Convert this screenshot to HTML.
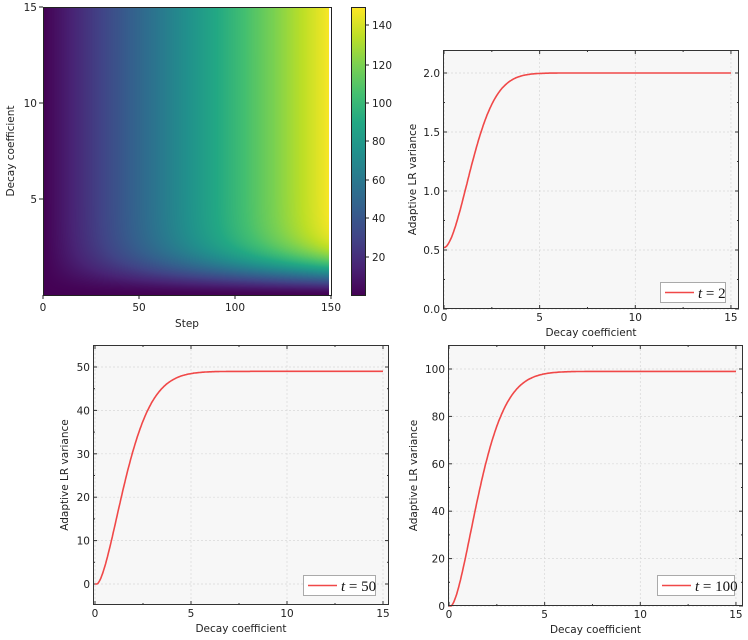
<!DOCTYPE html>
<html><head><meta charset="utf-8"><style>
html,body{margin:0;padding:0;background:#fff;width:748px;height:640px;overflow:hidden;position:relative}
svg{display:block;position:absolute;left:0;top:0}
canvas{position:absolute;left:43px;top:7px}
text{font-family:"DejaVu Sans","Liberation Sans",sans-serif;font-size:10.5px;fill:#222}
.leg{font-family:"Liberation Serif",serif;font-size:15px;fill:#111}
</style></head><body>
<canvas id="c" width="286" height="288"></canvas>
<svg id="s" width="748" height="640" xmlns="http://www.w3.org/2000/svg">
<defs>
<linearGradient id="virv" x1="0" y1="1" x2="0" y2="0">
<stop offset="0" stop-color="#440154"/><stop offset="0.1" stop-color="#482475"/><stop offset="0.2" stop-color="#414487"/><stop offset="0.3" stop-color="#355f8d"/><stop offset="0.4" stop-color="#2a788e"/><stop offset="0.5" stop-color="#21918c"/><stop offset="0.6" stop-color="#22a884"/><stop offset="0.7" stop-color="#44bf70"/><stop offset="0.8" stop-color="#7ad151"/><stop offset="0.9" stop-color="#bddf26"/><stop offset="1" stop-color="#fde725"/>
</linearGradient>
</defs>
<rect x="43.5" y="7.5" width="288" height="288" fill="none" stroke="#222" stroke-width="1"/>
<rect x="351.5" y="7.5" width="14" height="288" fill="url(#virv)" stroke="#222" stroke-width="1"/>
</svg>
<script>
var V=[[68,1,84],[72,36,117],[65,68,135],[53,95,141],[42,120,142],[33,145,140],[34,168,132],[68,191,112],[122,209,81],[189,223,38],[253,231,37]];
function vir(t){t=Math.max(0,Math.min(1,t))*10;var i=Math.min(9,Math.floor(t)),f=t-i;return V[i].map(function(a,k){return Math.round(a+(V[i+1][k]-a)*f);});}
var cv=document.getElementById('c'),cx=cv.getContext('2d'),im=cx.createImageData(286,288);
for(var y=0;y<288;y++){var d=15*(288-y)/288;var h=1-Math.exp(-Math.pow(Math.max(0,d)/1.5,1.7));
 for(var x=0;x<286;x++){var st=150*x/288;var c=vir(st*h/150);var p=(y*286+x)*4;im.data[p]=c[0];im.data[p+1]=c[1];im.data[p+2]=c[2];im.data[p+3]=255;}}
cx.putImageData(im,0,0);
var s=document.getElementById('s'),NS='http://www.w3.org/2000/svg';
function el(t,a,txt){var e=document.createElementNS(NS,t);for(var k in a)e.setAttribute(k,a[k]);if(txt!=null)e.textContent=txt;s.appendChild(e);return e;}
[[0,43],[50,139],[100,235],[150,331]].forEach(function(p){el('line',{x1:p[1],y1:295,x2:p[1],y2:299,stroke:'#222'});el('text',{x:p[1],y:311,'text-anchor':'middle'},p[0]);});
[[15,7],[10,103],[5,199]].forEach(function(p){el('line',{x1:39,y1:p[1],x2:43,y2:p[1],stroke:'#222'});el('text',{x:37,y:p[1]+4,'text-anchor':'end'},p[0]);});
el('text',{x:187,y:327,'text-anchor':'middle'},'Step');
el('text',{x:14,y:151,'text-anchor':'middle',transform:'rotate(-90 14 151)'},'Decay coefficient');
[[140,25],[120,65],[100,103],[80,141],[60,180],[40,218],[20,257]].forEach(function(p){el('line',{x1:365,y1:p[1],x2:369,y2:p[1],stroke:'#222'});el('text',{x:372,y:p[1]+4},p[0]);});
function g(x){x=Math.max(0,x-0.1);return 1-Math.exp(-Math.pow(x/1.9,1.6));}
function plot(o){
 var L=o.L,R=o.R,T=o.T,B=o.B;
 el('rect',{x:L,y:T,width:R-L,height:B-T,fill:'#f7f7f7'});
 function X(v){return o.x0+v*o.sx;} function Y(v){return o.y0-v*o.sy;}
 [0,5,10,15].forEach(function(v){var x=X(v);el('line',{x1:x,y1:T,x2:x,y2:B,stroke:'#d8d8d8','stroke-dasharray':'2,2','stroke-width':0.7});});
 o.yt.forEach(function(v){var y=Y(v);el('line',{x1:L,y1:y,x2:R,y2:y,stroke:'#d8d8d8','stroke-dasharray':'2,2','stroke-width':0.7});});
 for(var v=0;v<=15;v+=2.5){var x=X(v),big=(v%5==0);var l=big?4:2;el('line',{x1:x,y1:B,x2:x,y2:B-l,stroke:'#333'});el('line',{x1:x,y1:T,x2:x,y2:T+l,stroke:'#333'});if(big)el('text',{x:x,y:B+12,'text-anchor':'middle'},v);}
 o.ymin.forEach(function(v){var y=Y(v);el('line',{x1:L,y1:y,x2:L+2,y2:y,stroke:'#333'});el('line',{x1:R,y1:y,x2:R-2,y2:y,stroke:'#333'});});
 o.yt.forEach(function(v,i){var y=Y(v);el('line',{x1:L,y1:y,x2:L+4,y2:y,stroke:'#333'});el('line',{x1:R,y1:y,x2:R-4,y2:y,stroke:'#333'});el('text',{x:L-3,y:y+4,'text-anchor':'end'},o.yl[i]);});
 var d='';for(var i=0;i<=300;i++){var xv=i*0.05;var fv=o.f(xv);d+=(i?'L':'M')+X(xv).toFixed(1)+','+Y(fv).toFixed(1);}
 el('path',{d:d,fill:'none',stroke:'#f04848','stroke-width':1.6});
 el('rect',{x:L+0.5,y:T+0.5,width:R-L-1,height:B-T-1,fill:'none',stroke:'#333','stroke-width':1});
 var lg=o.lg;el('rect',{x:lg[0]+0.5,y:lg[1]+0.5,width:lg[2],height:20,fill:'#fff',stroke:'#aaa'});
 el('line',{x1:lg[0]+5,y1:lg[1]+10.5,x2:lg[0]+34,y2:lg[1]+10.5,stroke:'#f04848','stroke-width':1.6});
 var t=el('text',{x:lg[0]+38,y:lg[1]+16,'class':'leg'});t.innerHTML='<tspan font-style="italic">t</tspan> = '+o.t;
 el('text',{x:(L+R)/2,y:B+27,'text-anchor':'middle'},'Decay coefficient');
 var ax=o.lx,ay=(T+B)/2;el('text',{x:ax,y:ay,'text-anchor':'middle',transform:'rotate(-90 '+ax+' '+ay+')'},'Adaptive LR variance');
}
plot({L:443,R:739,T:50,B:309,x0:444,sx:19.13,y0:309,sy:118,yt:[0,0.5,1,1.5,2],yl:['0.0','0.5','1.0','1.5','2.0'],ymin:[0.25,0.75,1.25,1.75],
 f:function(x){return 0.52+1.48*(1-Math.exp(-Math.pow(x/1.85,1.8)));},lg:[660,282,65],t:'2',lx:416});
plot({L:93,R:389,T:345,B:605,x0:95,sx:19.2,y0:584,sy:4.34,yt:[0,10,20,30,40,50],yl:['0','10','20','30','40','50'],ymin:[5,15,25,35,45],
 f:function(x){return 49*g(x);},lg:[303,575,72],t:'50',lx:68});
plot({L:448,R:743,T:345,B:606,x0:449,sx:19.13,y0:606,sy:2.37,yt:[0,20,40,60,80,100],yl:['0','20','40','60','80','100'],ymin:[10,30,50,70,90],
 f:function(x){return 99*g(x);},lg:[657,575,77],t:'100',lx:417});
</script>
</body></html>
